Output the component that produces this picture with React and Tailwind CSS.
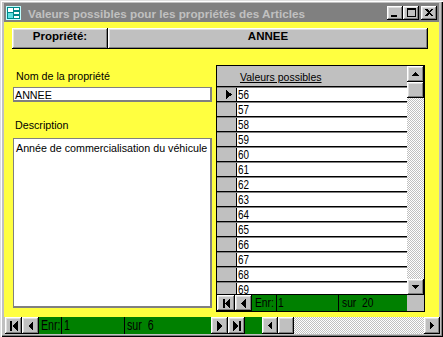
import React from "react";

const bevel =
  "shadow-[inset_-1px_-1px_0_#000,inset_1px_1px_0_#fff,inset_-2px_-2px_0_#808080,inset_2px_2px_0_#dfdfdf]";

const Tri = ({ dir, w = 6, h = 10 }) => {
  const pts =
    dir === "left"
      ? `${w},0 0,${h / 2} ${w},${h}`
      : dir === "right"
      ? `0,0 ${w},${h / 2} 0,${h}`
      : dir === "up"
      ? `0,${h} ${w / 2},0 ${w},${h}`
      : `0,0 ${w / 2},${h} ${w},0`;
  return (
    <svg width={w} height={h} viewBox={`0 0 ${w} ${h}`} className="block" shapeRendering="crispEdges">
      <polygon points={pts} fill="#000" />
    </svg>
  );
};

const Bar = ({ h }) => <div className="w-[2px] bg-black" style={{ height: h }} />;

const Btn = ({ className = "", children }) => (
  <div className={`flex items-center justify-center bg-[#c0c0c0] shrink-0 ${bevel} ${className}`}>{children}</div>
);

const Narrow = ({ children }) => (
  <span className="inline-block origin-left scale-x-[0.76] whitespace-pre">{children}</span>
);

const FormIcon = () => (
  <svg width="15" height="14" viewBox="0 0 15 14" className="block" shapeRendering="crispEdges">
    <rect x="0" y="0" width="15" height="14" fill="#c0ffff" />
    <rect x="1" y="1" width="13" height="12" fill="#008888" />
    <rect x="2" y="2" width="5" height="4" fill="#ffffff" />
    <rect x="2" y="7" width="5" height="5" fill="#60e0e0" />
    <rect x="8" y="2" width="5" height="2" fill="#ffffff" />
    <rect x="8" y="6" width="5" height="2" fill="#ffffff" />
    <rect x="8" y="10" width="5" height="2" fill="#ffffff" />
  </svg>
);

const rows = [56, 57, 58, 59, 60, 61, 62, 63, 64, 65, 66, 67, 68, 69];

export default function App() {
  return (
    <div className="w-[443px] h-[337px] overflow-hidden bg-[#c0c0c0] font-['Liberation_Sans',Arial,sans-serif] flex flex-col pt-[3px] px-[4px] pb-[3px] shadow-[inset_1px_1px_0_#dfdfdf,inset_2px_2px_0_#fff,inset_-1px_-1px_0_#000,inset_-2px_-2px_0_#808080]">
      {/* Title bar */}
      <div className="h-[19px] shrink-0 bg-[#808080] flex items-center pl-[2px] pr-[2px]">
        <FormIcon />
        <span className="ml-[7px] self-start pt-[2px] leading-[17px] text-[11.7px] font-bold text-[#c0c0c0] whitespace-nowrap">
          Valeurs possibles pour les propriétés des Articles
        </span>
        <div className="ml-auto flex items-center">
          <Btn className="w-[16px] h-[14px] items-end pb-[3px]">
            <div className="w-[6px] h-[2px] bg-black mr-[2px]" />
          </Btn>
          <Btn className="w-[16px] h-[14px]">
            <div className="w-[9px] h-[9px] border border-black border-t-2 mb-[1px]" />
          </Btn>
          <Btn className="w-[16px] h-[14px] ml-[2px]">
            <svg width="8" height="7" viewBox="0 0 8 7" className="block mb-[1px]" shapeRendering="crispEdges">
              <path d="M0 0h2l2 2 2-2h2L5 3.5 8 7H6L4 5 2 7H0l3-3.5z" fill="#000" />
            </svg>
          </Btn>
        </div>
      </div>

      {/* Body */}
      <div className="h-[295px] shrink-0 bg-[#ffff40] pl-[8px] pt-[6px] flex flex-col">
        {/* header buttons */}
        <div className="flex h-[21px] shrink-0">
          <div className={`w-[96px] h-full bg-[#c0c0c0] flex justify-center pt-[2px] ${bevel}`}>
            <span className="text-[11.5px] font-bold leading-[12px] text-black">Propriété:</span>
          </div>
          <div className={`w-[320px] h-full bg-[#c0c0c0] flex justify-center pt-[2px] ${bevel}`}>
            <span className="text-[11.5px] font-bold leading-[12px] text-black">ANNEE</span>
          </div>
        </div>

        <div className="flex items-start mt-[16px]">
          {/* Left column */}
          <div className="ml-[1px] w-[199px] flex flex-col pt-[5px]">
            <div className="text-[10.7px] leading-[13px] h-[13px] pl-[3px] text-black">Nom de la propriété</div>
            <div className="mt-[4px] h-[15px] bg-white border border-[#808080] border-r-2 border-b-2 pl-[1px] pt-[1px] text-[10.7px] leading-[12px] text-black">
              ANNEE
            </div>
            <div className="mt-[17px] text-[10.7px] leading-[13px] h-[13px] pl-[2px] text-black">Description</div>
            <div className="mt-[6px] h-[170px] bg-white border border-[#808080] border-r-2 border-b-2 pl-[2px] pt-[3px] text-[10.7px] leading-[12px] text-black">
              Année de commercialisation du véhicule
            </div>
          </div>

          {/* Subform */}
          <div className="ml-[4px] w-[209px] h-[247px] border border-black flex flex-col bg-[#c0c0c0]">
            <div className="flex h-[229px] shrink-0">
              <div className="w-[190px] flex flex-col">
                <div className="h-[20px] shrink-0 bg-[#c0c0c0] pl-[23px] pt-[5px]">
                  <span className="text-[10.5px] leading-[12px] underline text-black block">Valeurs possibles</span>
                </div>
                <div className="h-[1px] bg-black shrink-0" />
                <div className="h-[1px] bg-[#808080] shrink-0" />
                <div className="h-[206px] overflow-hidden shrink-0 flex flex-col">
                  {rows.map((n, i) => (
                    <div key={n} className="flex flex-col h-[15px] shrink-0">
                      <div className="flex h-[13px]">
                        <div className="w-[19px] bg-[#c0c0c0] flex items-center pl-[9px]">
                          {i === 0 && <Tri dir="right" w={6} h={9} />}
                        </div>
                        <div className="w-[1px] bg-black" />
                        <div className="flex-1 bg-white pl-[1px] text-[13px] leading-[13px] text-black">
                          <Narrow>{n}</Narrow>
                        </div>
                      </div>
                      <div className="h-[1px] bg-black" />
                      <div className="h-[1px] bg-[#808080]" />
                    </div>
                  ))}
                </div>
                <div className="h-[1px] bg-black shrink-0" />
              </div>
              {/* vertical scrollbar */}
              <div className="w-[17px] flex flex-col">
                <Btn className="h-[16px] w-full">
                  <Tri dir="up" w={7} h={4} />
                </Btn>
                <Btn className="h-[16px] w-full" />
                <div className="flex-1 bg-[image:repeating-conic-gradient(#c0c0c0_0_25%,#ffffff_0_50%)] bg-[length:2px_2px]" />
                <Btn className="h-[16px] w-full">
                  <Tri dir="down" w={7} h={4} />
                </Btn>
              </div>
            </div>
            {/* sub nav */}
            <div className="flex h-[16px] shrink-0">
              <Btn className="w-[18px] h-full">
                <div className="flex items-center">
                  <Bar h={9} />
                  <Tri dir="left" w={5} h={9} />
                </div>
              </Btn>
              <Btn className="w-[17px] h-full">
                <Tri dir="left" w={5} h={9} />
              </Btn>
              <div className="w-[155px] h-full bg-[#008000] flex text-[13.5px] leading-[16px] text-black">
                <div className="w-[24px] pl-[3px] whitespace-nowrap"><Narrow>Enr:</Narrow></div>
                <div className="w-[1px] bg-black" />
                <div className="w-[61px] pl-[1px]"><Narrow>1</Narrow></div>
                <div className="w-[1px] bg-black" />
                <div className="w-[68px] pl-[3px]"><Narrow>sur  20</Narrow></div>
              </div>
              <div className="w-[17px] h-full bg-[#c0c0c0]" />
            </div>
          </div>
        </div>
      </div>

      {/* Bottom bar */}
      <div className="h-[17px] shrink-0 ml-[1px] w-[435px] flex">
        <Btn className="w-[17px] h-full">
          <div className="flex items-center">
            <Bar h={10} />
            <Tri dir="left" w={6} h={10} />
          </div>
        </Btn>
        <Btn className="w-[17px] h-full">
          <Tri dir="left" w={5} h={10} />
        </Btn>
        <div className="w-[172px] h-full bg-[#008000] flex text-[14px] leading-[17px] text-black">
          <div className="w-[22px] pl-[2px] whitespace-nowrap"><Narrow>Enr:</Narrow></div>
          <div className="w-[1px] bg-black" />
          <div className="w-[62px] pl-[2px]"><Narrow>1</Narrow></div>
          <div className="w-[1px] bg-black" />
          <div className="w-[86px] pl-[2px]"><Narrow>sur  6</Narrow></div>
        </div>
        <Btn className="w-[17px] h-full">
          <Tri dir="right" w={5} h={10} />
        </Btn>
        <Btn className="w-[17px] h-full">
          <div className="flex items-center">
            <Tri dir="right" w={6} h={10} />
            <Bar h={10} />
          </div>
        </Btn>
        <div className="w-[17px] h-full bg-[#008000]" />
        <Btn className="w-[16px] h-full">
          <Tri dir="left" w={4} h={7} />
        </Btn>
        <Btn className="w-[16px] h-full" />
        <div className="w-[130px] h-full bg-[image:repeating-conic-gradient(#c0c0c0_0_25%,#ffffff_0_50%)] bg-[length:2px_2px]" />
        <Btn className="w-[16px] h-full">
          <Tri dir="right" w={4} h={7} />
        </Btn>
      </div>
    </div>
  );
}
